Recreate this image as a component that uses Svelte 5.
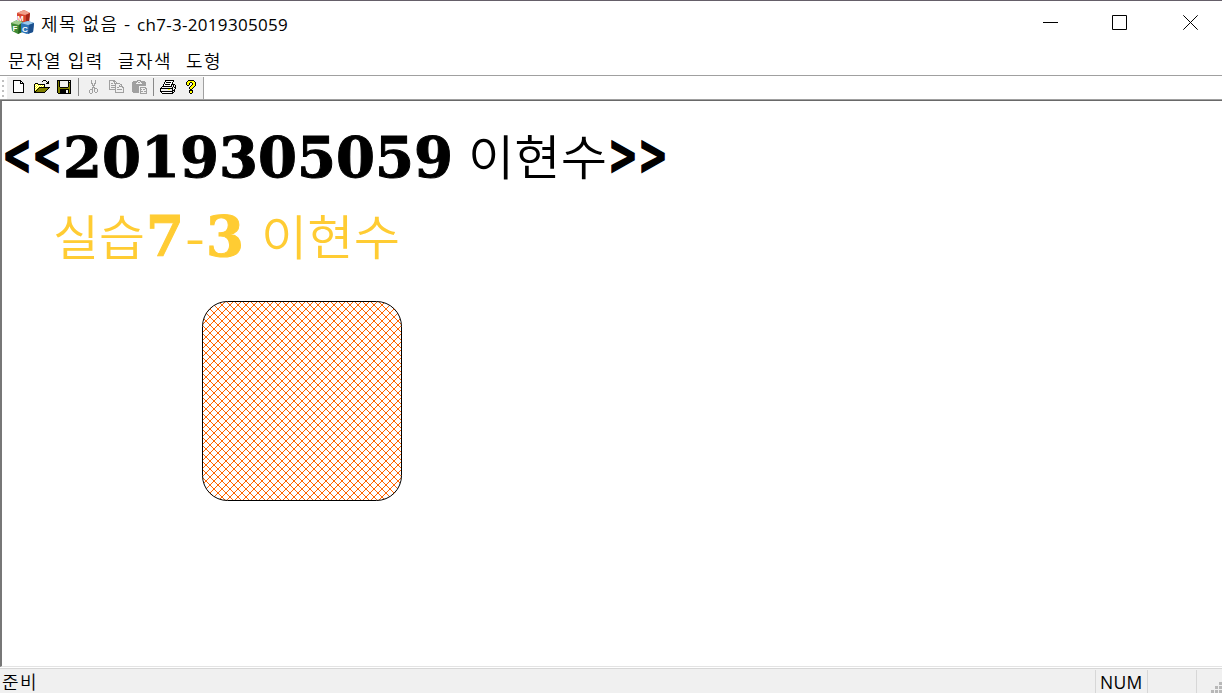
<script>
  const colors = { '#': '#000000', o: '#808000', Y: '#ffff00', W: '#ffffff', g: '#a0a0a0', l: '#f0f0f0' };

  const icons = {
    fresh: [
      '########...',
      '#WWWWWW##..',
      '#WWWWWW#W#.',
      '#WWWWWW####',
      '#WWWWWWWWW#',
      '#WWWWWWWWW#',
      '#WWWWWWWWW#',
      '#WWWWWWWWW#',
      '#WWWWWWWWW#',
      '#WWWWWWWWW#',
      '#WWWWWWWWW#',
      '#WWWWWWWWW#',
      '###########'
    ],
    open: [
      '.........###....',
      '........#...#.#.',
      '.............##.',
      '.###........###.',
      '#YWY#######.....',
      '#WYWYWYWYW#.....',
      '#YWYWYWYWY#.....',
      '#WYWY###########',
      '#YWY#ooooooooo#.',
      '#WY#ooooooooo#..',
      '#Y#ooooooooo#...',
      '##ooooooooo#....',
      '###########.....'
    ],
    save: [
      '##############',
      '#o#llllllll#l#',
      '#o#llllllll###',
      '#o#llllllll#o#',
      '#o#llllllll#o#',
      '#o#llllllll#o#',
      '#o#llllllll#o#',
      '#oo########oo#',
      '#oooooooooooo#',
      '#oo#########o#',
      '#oo######ll#o#',
      '#oo######ll#o#',
      '#oo######ll#o#',
      '.#############'
    ],
    cut: [
      '..g...g..',
      '..g...g..',
      '..g...g..',
      '..gg.gg..',
      '...g.g...',
      '...ggg...',
      '....g....',
      '...ggg...',
      '...g.ggg.',
      '.ggg.g..g',
      'g..g.g..g',
      'g..g.g..g',
      'g..g..gg.',
      '.gg......'
    ],
    copy: [
      'gggggg.........',
      'glllggg........',
      'gllllglg.......',
      'glgglgggggg....',
      'glllllgllllgg..',
      'glggggglllglg..',
      'glllllglllgggg.',
      'glggggglgglllgg',
      'glllllgllllllLg',
      'ggggggglgggggLg',
      '......glllllllg',
      '......glllllllg',
      '......ggggggggg'
    ],
    paste: [
      '.....gggg......',
      '.ggggg..ggggg..',
      'ggggg.gg.ggggg.',
      'gggg......gggg.',
      'gggggggggggggg.',
      'gggggggggggggg.',
      'ggggggglllllll.',
      'ggggggglgggggg.',
      'ggggggglgllllgg',
      'ggggggglgglgglg',
      'ggggggglglllllg',
      'ggggggglggglggg',
      '.gggggglglllllg',
      '.......lggggggg'
    ],
    print: [
      '.....#########..',
      '.....#WWWWWWW#..',
      '....#W#####W#...',
      '....#WWWWWWW#...',
      '...#W#####W####.',
      '...#WWWWWWW#l#l#',
      '..##########l#l#',
      '.#llllllllll#l##',
      '#############ll#',
      '#lllllllYYll#l#.',
      '#lllllllllll###.',
      '#############l#.',
      '.#WWWWWWWWWW##..',
      '..###########...'
    ],
    help: [
      '..######..',
      '.#YYYYYY#.',
      '#YYY##YYY#',
      '#YY#..#YY#',
      '#YY#..#YY#',
      '.##..#YYY#',
      '....#YYY#.',
      '...#YYY#..',
      '...#YY#...',
      '....##....',
      '...####...',
      '...#YY#...',
      '...#YY#...',
      '....##....'
    ]
  };

  const tools = [
    { name: 'fresh', inset: 6 },
    { name: 'open', inset: 4 },
    { name: 'save', inset: 4 },
    { name: 'sep' },
    { name: 'cut', inset: 7 },
    { name: 'copy', inset: 4 },
    { name: 'paste', inset: 4 },
    { name: 'sep' },
    { name: 'print', inset: 3 },
    { name: 'help', inset: 6 }
  ];

  const menus = ['문자열 입력', '글자색', '도형'];

  const pixels = (rows) =>
    rows.flatMap((row, y) => [...row].map((c, x) => ({ x, y, fill: colors[c] })).filter((p) => p.fill));
</script>

<div class="window">
  <header class="title">
    <svg class="logo" width="24" height="26" viewBox="0 0 24 26">
      <path d="M6 4 13 1 19 4 18 13 11 15 6 12Z" fill="#d9442e" />
      <path d="M6 4 13 1 19 4 14 6Z" fill="#f0a08c" />
      <path d="M15 6 19 4 18 13 15 14Z" fill="#a32618" />
      <path d="M0 14 6 11 12 13 11 23 7 25 1 22Z" fill="#3f8b35" />
      <path d="M0 14 6 11 12 13 8 16Z" fill="#a3cf91" />
      <path d="M8 16 12 13 11 23 7 25Z" fill="#246020" />
      <path d="M10 14 17 12 23 14 22 23 16 25 10 23Z" fill="#2d75b8" />
      <path d="M10 14 17 12 23 14 17 16Z" fill="#9cc9ea" />
      <path d="M18 16 23 14 22 23 17 25Z" fill="#1c4f8c" />
      <g fill="#fff" font-family="Liberation Sans" font-weight="700" font-size="8">
        <text x="6" y="12">M</text><text x="1.5" y="21.5">F</text><text x="11" y="23">C</text>
      </g>
    </svg>
    <span class="caption">제목 없음 - <span class="latin">ch7-3-2019305059</span></span>
    <svg class="controls" width="156" height="16" viewBox="0 0 156 16" fill="none" stroke="#000" stroke-width="1">
      <path d="M0 7.5H15" />
      <path d="M69.5.5h14v14h-14z" />
      <path d="M140.3.3 154.7 14.7M154.7.3 140.3 14.7" />
    </svg>
  </header>

  <nav class="menu">
    {#each menus as item}<span>{item}</span>{/each}
  </nav>

  <div class="toolbar">
    <div class="grip"><i></i><i></i><i></i><i></i></div>
    <div class="tools">
      {#each tools as tool}
        {#if tool.name === 'sep'}
          <div class="sep"></div>
        {:else}
          <div class="tool" style="padding-left: {tool.inset}px">
            <svg
              width={icons[tool.name][0].length}
              height={icons[tool.name].length}
              shape-rendering="crispEdges"
            >
              {#each pixels(icons[tool.name]) as p}
                <rect x={p.x} y={p.y} width="1" height="1" fill={p.fill} />
              {/each}
            </svg>
          </div>
        {/if}
      {/each}
    </div>
  </div>

  <main class="view">
    <svg width="1220" height="565" viewBox="2 101 1220 565">
      <defs>
        <pattern id="hatch" x="2" y="5" width="8" height="8" patternUnits="userSpaceOnUse">
          {#each [0, 1, 2, 3, 4, 5, 6, 7] as i}
            <rect x={i} y={i} width="1" height="1" fill="#ff6600" shape-rendering="crispEdges" />
            <rect x={7 - i} y={i} width="1" height="1" fill="#ff6600" shape-rendering="crispEdges" />
          {/each}
        </pattern>
      </defs>
      <g class="heading">
        <text class="sign" x="2" y="174" textLength="60" lengthAdjust="spacingAndGlyphs">&lt;&lt;</text>
        <text class="wide" x="63" y="177" textLength="390" lengthAdjust="spacingAndGlyphs">2019305059</text>
        <text class="hangul" x="468" y="175" textLength="139" lengthAdjust="spacingAndGlyphs">이현수</text>
        <text class="sign" x="608" y="174" textLength="60" lengthAdjust="spacingAndGlyphs">&gt;&gt;</text>
      </g>
      <g class="note">
        <text class="hangul" x="53" y="255" textLength="92" lengthAdjust="spacingAndGlyphs">실습</text>
        <text class="wide" x="146" y="256" textLength="38" lengthAdjust="spacingAndGlyphs">7</text>
        <text class="dash" x="185" y="254" textLength="20" lengthAdjust="spacingAndGlyphs">-</text>
        <text class="wide" x="206" y="256" textLength="38" lengthAdjust="spacingAndGlyphs">3</text>
        <text class="hangul" x="261" y="255" textLength="139" lengthAdjust="spacingAndGlyphs">이현수</text>
      </g>
      <rect x="202.5" y="301.5" width="199" height="199" rx="25" fill="url(#hatch)" stroke="#000" />
    </svg>
  </main>

  <footer class="status">
    <span class="ready">준비</span>
    <span class="pane num">NUM</span>
    <span class="pane scroll"></span>
    <span class="pane corner">
      <svg width="11" height="11" fill="#b8b8b8" shape-rendering="crispEdges">
        <path d="M8 0h3v3h-3zM4 4h3v3h-3zM8 4h3v3h-3zM0 8h3v3h-3zM4 8h3v3h-3zM8 8h3v3h-3z" />
      </svg>
    </span>
  </footer>
</div>

<style>
  :global(body) {
    background: #fff;
  }
  .window {
    box-sizing: border-box;
    width: 1222px;
    height: 693px;
    overflow: hidden;
    display: flex;
    flex-direction: column;
    background: #fff;
    color: #000;
    font-family: 'Noto Sans CJK KR', sans-serif;
    font-weight: 350;
  }
  .title {
    box-sizing: border-box;
    height: 47px;
    flex: none;
    display: flex;
    align-items: flex-start;
    padding: 8px 23px 0 11px;
    border-top: 1px solid #655f69;
  }
  .logo {
    flex: none;
  }
  .caption {
    margin: 3px 0 0 6px;
    font-size: 18px;
    line-height: 22px;
    letter-spacing: 1.45px;
    white-space: pre;
  }
  .latin {
    font-family: 'Open Sans', sans-serif;
    font-weight: 400;
    font-size: 17px;
    letter-spacing: 0.3px;
  }
  .controls {
    margin: 6px 0 0 auto;
  }
  .menu {
    height: 28px;
    flex: none;
    display: flex;
    gap: 14px;
    padding-left: 8px;
    font-size: 18px;
    line-height: 26px;
    letter-spacing: 1.5px;
    white-space: pre;
  }
  .toolbar {
    box-sizing: border-box;
    height: 25px;
    flex: none;
    display: flex;
    border-top: 1px solid #a0a0a0;
    border-bottom: 1px solid #a0a0a0;
  }
  .grip {
    width: 7px;
    box-sizing: border-box;
    padding: 4px 0 0 2px;
    display: flex;
    flex-direction: column;
    gap: 3px;
  }
  .grip i {
    width: 2px;
    height: 2px;
    background: #c0c0c0;
  }
  .tools {
    box-sizing: border-box;
    width: 197px;
    margin-top: 1px;
    padding-top: 3px;
    display: flex;
    align-items: flex-start;
    background: #f0f0f0;
    border-right: 1px solid #a0a0a0;
  }
  .tool {
    box-sizing: border-box;
    width: 23px;
    flex: none;
  }
  .tool svg {
    display: block;
  }
  .sep {
    width: 1px;
    height: 18px;
    margin: -2px 3px 0 2px;
    background: #888;
  }
  .view {
    box-sizing: border-box;
    height: 567px;
    flex: none;
    border-top: 1px solid #696969;
    border-bottom: 1px solid #e3e3e3;
    border-left: 2px solid #777;
  }
  .view svg {
    display: block;
  }
  .heading {
    color: #000;
    fill: currentColor;
  }
  .note {
    color: #ffcc33;
    fill: currentColor;
  }
  .hangul {
    font-family: 'Noto Sans CJK KR', sans-serif;
    font-size: 48px;
    font-weight: 350;
  }
  .wide {
    font-family: 'DejaVu Serif', serif;
    font-weight: 700;
    font-size: 56px;
    stroke: currentColor;
    stroke-width: 1px;
  }
  .sign {
    font-family: 'DejaVu Sans', sans-serif;
    font-weight: 700;
    font-size: 56px;
    stroke: currentColor;
    stroke-width: 1.5px;
  }
  .dash {
    font-family: 'Liberation Sans', sans-serif;
    font-size: 44px;
  }
  .status {
    box-sizing: border-box;
    height: 25px;
    flex: none;
    margin-top: 1px;
    display: flex;
    background: #f0f0f0;
    border-top: 1px solid #d7d7d7;
    font-size: 18px;
    line-height: 24px;
  }
  .ready {
    flex: 1;
    padding-left: 2px;
    letter-spacing: 1.5px;
  }
  .pane {
    box-sizing: border-box;
    height: 23px;
    margin-top: 1px;
    border-left: 1px solid #d7d7d7;
  }
  .num {
    width: 52px;
    padding: 1px 0 0 4px;
    font-family: 'Open Sans', sans-serif;
    font-weight: 400;
    font-size: 17.5px;
    line-height: 22px;
    letter-spacing: 0.3px;
  }
  .scroll {
    width: 49px;
  }
  .corner {
    width: 26px;
    display: flex;
    justify-content: flex-end;
    align-items: flex-end;
  }
</style>
